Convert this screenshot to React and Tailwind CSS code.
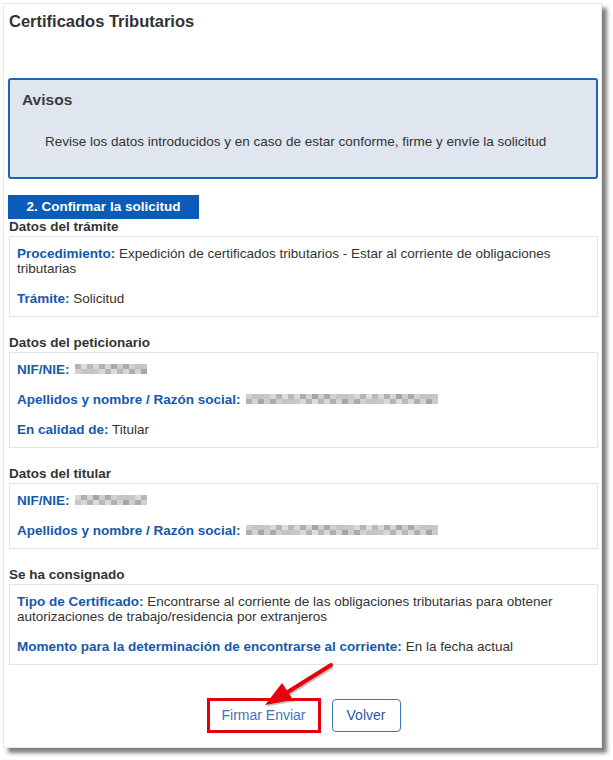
import React from 'react';

const FONT = { fontFamily: '"Liberation Sans", Arial, sans-serif' };

// pixelated (blurred) values
const GREYS = [
  'bg-[#c9c5c5]', 'bg-[#b8b4b4]', 'bg-[#dad7d7]', 'bg-[#a9a5a5]', 'bg-[#d3cfcf]',
  'bg-[#c4c8d2]', 'bg-[#e2dbdb]', 'bg-[#b2afaf]', 'bg-[#cfcccc]', 'bg-[#c0c6c0]',
  'bg-[#dcd6d6]', 'bg-[#bdb9b9]', 'bg-[#d0d4dc]', 'bg-[#aeaaaa]',
];

function Mosaic({ blocks, seed = 0 }) {
  const rows = [0, 1];
  return (
    <span className="inline-flex flex-col align-middle ml-[2px] -mt-[2px]">
      {rows.map((r) => (
        <span key={r} className="flex">
          {Array.from({ length: blocks }).map((_, i) => (
            <span
              key={i}
              className={`w-[6px] h-[5px] ${GREYS[(i * 5 + r * 3 + seed) % GREYS.length]}`}
            />
          ))}
        </span>
      ))}
    </span>
  );
}

function Item({ label, children }) {
  return (
    <div className="leading-[15px] text-[#333]">
      <b className="text-[#1459ad]">{label}</b> {children}
    </div>
  );
}

function Section({ title, children, first = false }) {
  return (
    <div className={first ? '' : 'mt-[18px]'}>
      <div className="text-[13.5px] leading-[15px] font-bold text-[#333] ml-[1px]">{title}</div>
      <div className="mt-[2px] ml-[1px] border border-[#dfe5ee] pt-[9px] pb-[10px] pl-[7px] pr-[8px] flex flex-col gap-[15px] text-[13.5px]">
        {children}
      </div>
    </div>
  );
}

export default function App() {
  return (
    <div className="relative w-[613px] h-[760px] bg-white pt-[3px] pl-[3px]" style={FONT}>
      <div className="w-[599px] h-[745px] bg-white border border-[#e8e8e8] shadow-[5px_5px_4px_rgba(0,0,0,0.5)] pt-[8px] pl-[4px] pr-[3px]">
        <h1 className="ml-[1px] text-[16.5px] leading-[18px] font-bold text-[#333]">Certificados Tributarios</h1>

        {/* Avisos */}
        <div className="mt-[48px] h-[101px] border-2 border-[#1f62b8] rounded-[3px] bg-[#dfe6ef] pt-[11px] pl-[12px]">
          <div className="text-[15.5px] leading-[18px] font-bold text-[#3a3a3a]">Avisos</div>
          <p className="mt-[25px] pl-[23px] text-[13.5px] leading-[15px] text-[#333]">
            Revise los datos introducidos y en caso de estar conforme, firme y envíe la solicitud
          </p>
        </div>

        {/* Step tab */}
        <div className="mt-[16px] w-[191px] h-[24px] bg-[#0b5cb8] text-white text-[13.5px] font-bold flex items-center justify-center">
          2. Confirmar la solicitud
        </div>

        <Section title="Datos del trámite" first>
          <Item label="Procedimiento:">
            Expedición de certificados tributarios - Estar al corriente de obligaciones tributarias
          </Item>
          <Item label="Trámite:">Solicitud</Item>
        </Section>

        <Section title="Datos del peticionario">
          <Item label="NIF/NIE:"><Mosaic blocks={12} seed={1} /></Item>
          <Item label="Apellidos y nombre / Razón social:"><Mosaic blocks={32} seed={4} /></Item>
          <Item label="En calidad de:">Titular</Item>
        </Section>

        <Section title="Datos del titular">
          <Item label="NIF/NIE:"><Mosaic blocks={12} seed={2} /></Item>
          <Item label="Apellidos y nombre / Razón social:"><Mosaic blocks={32} seed={4} /></Item>
        </Section>

        <Section title="Se ha consignado">
          <Item label="Tipo de Certificado:">
            Encontrarse al corriente de las obligaciones tributarias para obtener autorizaciones de trabajo/residencia por extranjeros
          </Item>
          <Item label="Momento para la determinación de encontrarse al corriente:">En la fecha actual</Item>
        </Section>

        {/* Buttons */}
        <div className="mt-[33px] flex items-center justify-center gap-[11px] pl-[1px]">
          <span className="inline-flex border-[3px] border-[#e5000c]">
            <button className="w-[108px] h-[29px] bg-white text-[14px] text-[#3f74bb]">Firmar Enviar</button>
          </span>
          <button className="w-[69px] h-[33px] border border-[#3b79c3] rounded-[4px] bg-white text-[14px] text-[#1d59a6]">
            Volver
          </button>
        </div>
      </div>

      {/* annotation arrow */}
      <svg className="absolute left-0 top-0 pointer-events-none" width="613" height="760">
        <g opacity="0.35" transform="translate(1.5 1.5)">
          <line x1="331" y1="665" x2="283" y2="695" stroke="#555" strokeWidth="4" />
          <polygon points="265,705 293,700 282,683" fill="#555" />
        </g>
        <line x1="331" y1="665" x2="283" y2="695" stroke="#e8000c" strokeWidth="4" strokeLinecap="round" />
        <polygon points="265,705 293,700 282,683" fill="#e8000c" />
      </svg>
    </div>
  );
}
